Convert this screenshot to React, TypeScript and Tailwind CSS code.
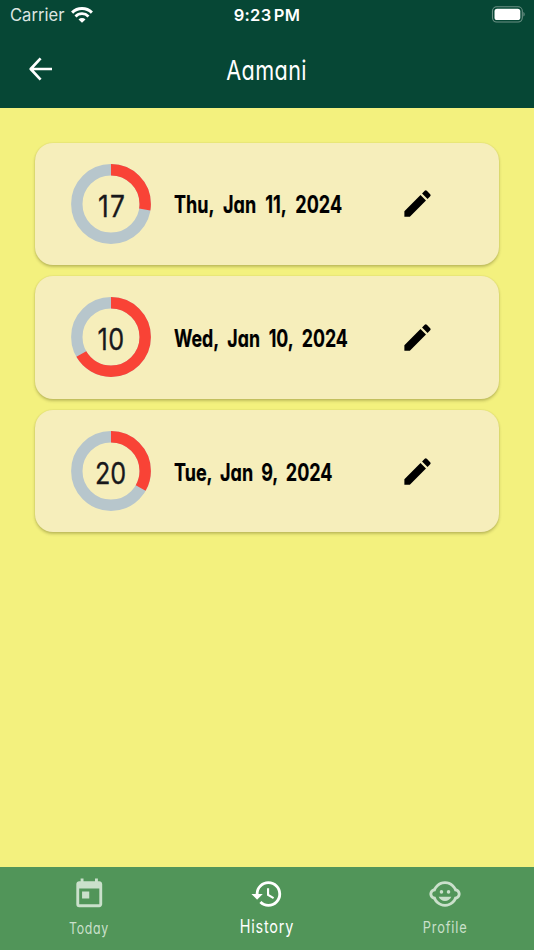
import { MdEdit, MdHistory, MdToday, MdChildCare } from "react-icons/md";

// Inter's cv11 set gives the single-storey "a".
const hand = "font-['Inter','Open_Sans',sans-serif] [font-feature-settings:'cv11'_1]";

const entries = [
  { score: "17", numberScale: "scale-x-[0.88] tracking-[1.5px] -mr-[1.5px]", share: 0.276, date: "Thu, Jan 11, 2024", scale: "scale-x-[0.75] [word-spacing:6.5px]" },
  { score: "10", numberScale: "scale-x-[0.84] tracking-[0.5px]", share: 0.667, date: "Wed, Jan 10, 2024", scale: "scale-x-[0.74] [word-spacing:6px]" },
  { score: "20", numberScale: "scale-x-[0.84]", share: 0.333, date: "Tue, Jan 9, 2024", scale: "scale-x-[0.75] [word-spacing:5px]" },
];

function Ring({ share }: { share: number }) {
  return (
    <svg viewBox="0 0 80 80" className="col-start-1 row-start-1 size-20 -rotate-90">
      <circle cx="40" cy="40" r="34.2" fill="none" stroke="#b7c6cc" strokeWidth="11.4" />
      <circle
        cx="40"
        cy="40"
        r="34.2"
        fill="none"
        stroke="#f94336"
        strokeWidth="11.4"
        pathLength="1"
        strokeDasharray={`${share} 1`}
      />
    </svg>
  );
}

function StatusBar() {
  return (
    <div className="grid h-[30px] grid-cols-3 items-center px-[10px] font-['Inter',sans-serif] text-[17px] leading-none text-white">
      <div className="flex items-center gap-[7px] text-[#dce5e1]">
        <span className="text-[16.6px]">Carrier</span>
        <svg viewBox="0 0 22 16" className="-mt-[1px] h-4 w-[22px]" fill="none" stroke="#fff">
          <path d="M1.1 5.6a14.2 14.2 0 0 1 19.8 0" strokeWidth="3" />
          <path d="M4.5 9.4a9.2 9.2 0 0 1 13 0" strokeWidth="2.8" />
          <path d="M7.5 12.4a5 5 0 0 1 7 0L11 15.8z" fill="#fff" stroke="none" />
        </svg>
      </div>
      <span className="text-center text-[16.5px] font-semibold tracking-[0.25px] [word-spacing:-2px]">9:23 PM</span>
      <svg viewBox="0 0 34 17" className="-mr-[1px] -mt-[2px] h-[17px] w-[34px] justify-self-end">
        <rect x="1.5" y=".8" width="29.8" height="15.2" rx="4.2" fill="none" stroke="#6b9084" strokeWidth="1.1" />
        <rect x="3.5" y="2.8" width="25.8" height="11.2" rx="2.6" fill="#fff" />
        <path d="M32.4 6v4.6c1.7-.6 1.7-4 0-4.6z" fill="#6b9084" />
      </svg>
    </div>
  );
}

export default function App() {
  return (
    <div className="flex h-[950px] w-[534px] flex-col overflow-hidden bg-[#f3f17e]">
      <header className="h-[108px] shrink-0 bg-[#064735] text-white">
        <StatusBar />
        <div className="grid h-[78px] grid-cols-3 items-center px-[28px]">
          <svg viewBox="0 0 24 24" className="-mt-[1px] size-6" fill="none" stroke="#fff" strokeWidth="2.7">
            <path d="M12.6 1.4 2.7 12l9.9 10.6M2.4 12H24" strokeLinejoin="round" />
          </svg>
          <h1 className={`${hand} mt-[3px] scale-x-[0.8] text-center text-[27px] leading-8 tracking-[0.5px]`}>Aamani</h1>
        </div>
      </header>

      <main className="flex flex-1 flex-col gap-[11.2px] px-[35px] pt-[34.5px]">
        {entries.map((e) => (
          <article
            key={e.score}
            className="flex h-[122.5px] items-center rounded-[18px] bg-[#f6eebb] pl-9 shadow-[0_2px_3px_rgba(80,75,20,0.3),0_0_2px_rgba(80,75,20,0.14)]"
          >
            <div className="grid size-20 shrink-0 place-items-center">
              <Ring share={e.share} />
              <span className={`${hand} ${e.numberScale} col-start-1 row-start-1 mt-[4px] text-[30px] leading-none text-[#18181b] [-webkit-text-stroke-width:0.3px]`}>
                {e.score}
              </span>
            </div>
            <div className="ml-[23px] mt-[3px] w-[229px] whitespace-nowrap">
              <span className={`${hand} ${e.scale} inline-block origin-left text-[24px] font-bold leading-8 text-black [-webkit-text-stroke-width:0.2px]`}>
                {e.date}
              </span>
            </div>
            <MdEdit className="-ml-[3px] size-[35px] shrink-0 text-black" />
          </article>
        ))}
      </main>

      <nav className="grid h-[83px] shrink-0 grid-cols-3 bg-[#519559] text-[#cae0cb]">
        <div className="flex flex-col items-center pt-[10px]">
          <MdToday className="size-[34.5px]" />
          <span className={`${hand} mt-[4px] scale-x-[0.77] text-[16px] leading-6 tracking-[0.9px]`}>Today</span>
        </div>
        <div className="flex flex-col items-center pt-[10px] text-white">
          <MdHistory className="size-[34px]" />
          <span className={`${hand} mt-[4px] scale-x-[0.8] text-[18px] leading-6 tracking-[1px]`}>History</span>
        </div>
        <div className="flex flex-col items-center pt-[10px]">
          <MdChildCare className="size-[34px]" />
          <span className={`${hand} mt-[4px] scale-x-[0.8] text-[16px] leading-6 tracking-[1.1px]`}>Profile</span>
        </div>
      </nav>
    </div>
  );
}
